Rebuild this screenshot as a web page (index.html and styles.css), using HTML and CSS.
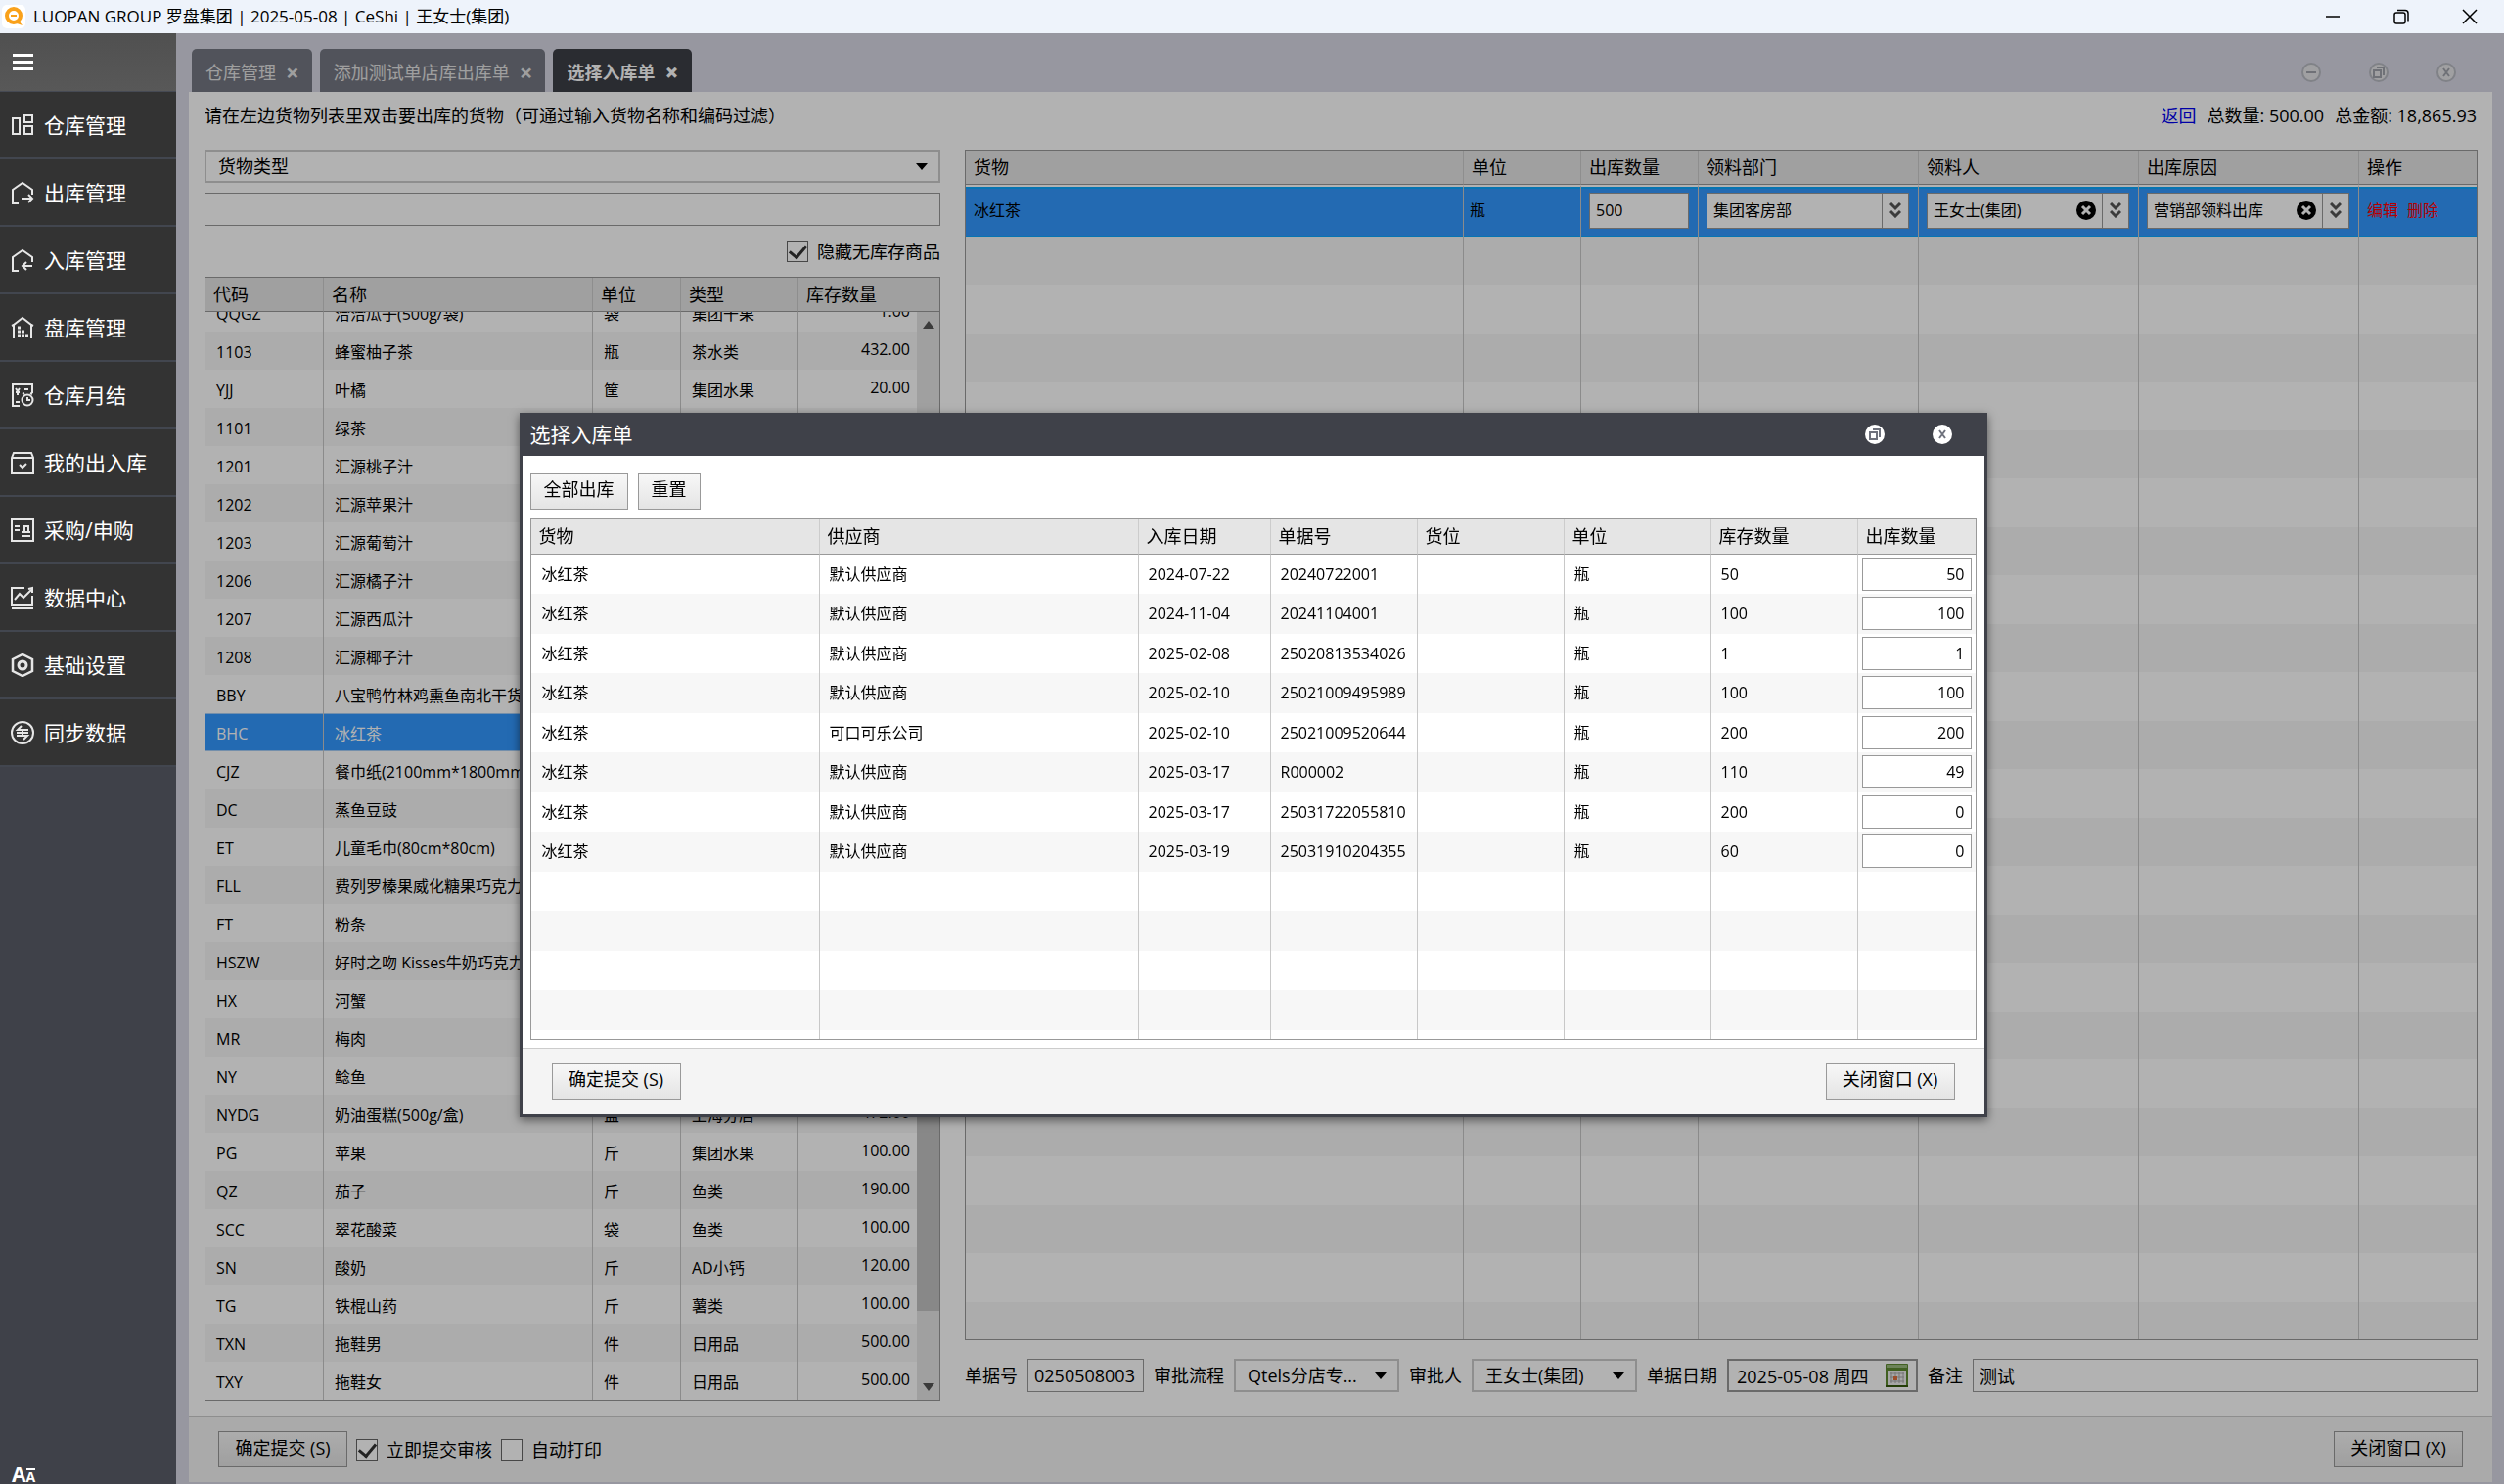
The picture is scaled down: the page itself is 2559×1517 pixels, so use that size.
FILE: index.html
```html
<!DOCTYPE html>
<html lang="zh-CN">
<head>
<meta charset="utf-8">
<meta name="viewport" content="width=device-width, initial-scale=1">
<title>LUOPAN GROUP 罗盘集团</title>
<link rel="stylesheet" href="styles.css">
</head>
<body>

<header class="titlebar">
	<svg class="logo" viewBox="0 0 24 24"><rect width="24" height="24" rx="5" fill="#fff"/><circle cx="12" cy="11" r="7" fill="none" stroke="#f9a11b" stroke-width="4"/><path d="M10 19h5l6 2-4-5" fill="#f9a11b"/><path d="M9 11h6" stroke="#f9a11b" stroke-width="2"/></svg>
	<span class="caption">LUOPAN GROUP 罗盘集团 | 2025-05-08 | CeShi | 王女士(集团)</span>
	<div class="win-buttons">
		<button aria-label="最小化"><svg viewBox="0 0 16 16"><path d="M1 8h14"/></svg></button>
		<button aria-label="还原"><svg viewBox="0 0 16 16"><rect x="1" y="4" width="11" height="11" rx="2"/><path d="M4 1.500h8a3 3 0 0 1 3 3v8"/></svg></button>
		<button aria-label="关闭"><svg viewBox="0 0 16 16"><path d="M1 1l14 14M15 1L1 15"/></svg></button>
	</div>
</header>

<div class="app">
	<nav class="sidebar">
		<button class="menu-toggle" aria-label="菜单"><i></i><i></i><i></i></button>
		<a href="#"><svg viewBox="0 0 24 24"><rect x="2" y="5" width="7" height="16"/><rect x="14" y="2" width="8" height="7"/><rect x="14" y="13" width="8" height="8"/></svg>仓库管理</a>
		<a href="#"><svg viewBox="0 0 24 24"><path d="M8 23H2V9l10-7 10 7v5M11 18h11M18 14l4 4-4 4"/></svg>出库管理</a>
		<a href="#"><svg viewBox="0 0 24 24"><path d="M8 23H2V9l10-7 10 7v5M22 18H12M16 14l-4 4 4 4"/></svg>入库管理</a>
		<a href="#"><svg viewBox="0 0 24 24"><path d="M3 23V9l9-7 9 7v14M1 10l2-1M23 10l-2-1"/><path d="M7 12h3M7 16h8M7 20h12" stroke-width="3" stroke-dasharray="3 1"/></svg>盘库管理</a>
		<a href="#"><svg viewBox="0 0 24 24"><path d="M9 23H2V1h20v9M5 5l2 3 2-3M5 9h4M7 8v4M14 6h4M5 19h4"/><circle cx="17" cy="17" r="5.500"/><path d="M17 14v3h3M12 11l2-1M22 11l-2-1"/></svg>仓库月结</a>
		<a href="#"><svg viewBox="0 0 24 24"><path d="M1 7l2-5h18l2 5v16H1zM1 7h22M9 14l3 3 4-4"/></svg>我的出入库</a>
		<a href="#"><svg viewBox="0 0 24 24"><rect x="1" y="1" width="22" height="22"/><path d="M4 8h5M4 12h5M11 14h9M11 18h9M14 13V8h4v5"/></svg>采购/申购</a>
		<a href="#"><svg viewBox="0 0 24 24"><path d="M14 2H1v17h21v-9M1 23h22M4 14l5-6 4 4 8-8M18 3l4-1v5"/></svg>数据中心</a>
		<a href="#"><svg viewBox="0 0 24 24"><path d="M12 1l10 5v12l-10 5-10-5V6z" stroke-width="2.500"/><circle cx="12" cy="12" r="4" stroke-width="3"/></svg>基础设置</a>
		<a href="#"><svg viewBox="0 0 24 24"><circle cx="12" cy="12" r="11"/><path d="M18 9H7l4-4M12 9v3h6M6 15h11l-4 4M12 15v-3H6"/></svg>同步数据</a>
		<div class="font-size"><b>A</b><small>A</small></div>
	</nav>

	<main class="main">
		<div class="tabs">
			<button class="tab">仓库管理 <b>×</b></button>
			<button class="tab">添加测试单店库出库单 <b>×</b></button>
			<button class="tab active">选择入库单 <b>×</b></button>
			<div class="round-buttons">
				<button aria-label="最小化"><svg viewBox="0 0 20 20"><circle cx="10" cy="10" r="9"/><path d="M5 10h10"/></svg></button>
				<button aria-label="还原"><svg viewBox="0 0 20 20"><circle cx="10" cy="10" r="9"/><path d="M5 8h7v7H5zM8 5h7v8"/></svg></button>
				<button aria-label="关闭"><svg viewBox="0 0 20 20"><circle cx="10" cy="10" r="9"/><path d="M7 6l6 8M13 6l-6 8"/></svg></button>
			</div>
		</div>

		<div class="panel">
			<div class="hint">
				<span>请在左边货物列表里双击要出库的货物（可通过输入货物名称和编码过滤）</span>
				<span class="totals"><a href="#">返回</a><span>总数量: 500.00</span><span>总金额: 18,865.93</span></span>
			</div>

			<div class="columns">
				<section class="left">
					<span class="select"><select aria-label="货物类型"><option>货物类型</option></select></span>
					<input class="filter" type="text" aria-label="过滤">
					<div class="hide-empty"><input type="checkbox" id="hide" checked><label for="hide">隐藏无库存商品</label></div>

					<div class="grid goods">
						<table>
							<colgroup><col class="c-code"><col><col class="c-unit"><col class="c-type"><col class="c-stock"></colgroup>
							<thead><tr><th>代码</th><th>名称</th><th>单位</th><th>类型</th><th>库存数量</th></tr></thead>
						</table>
						<div class="scroller">
							<div class="rows">
								<table>
									<colgroup><col class="c-code"><col><col class="c-unit"><col class="c-type"><col class="c-num"></colgroup>
									<tbody>
									<tr><td>QQGZ</td><td>洽洽瓜子(500g/袋)</td><td>袋</td><td>集团干果</td><td>1.00</td></tr>
									<tr><td>1103</td><td>蜂蜜柚子茶</td><td>瓶</td><td>茶水类</td><td>432.00</td></tr>
									<tr><td>YJJ</td><td>叶橘</td><td>筐</td><td>集团水果</td><td>20.00</td></tr>
									<tr><td>1101</td><td>绿茶</td><td></td><td></td><td></td></tr>
									<tr><td>1201</td><td>汇源桃子汁</td><td></td><td></td><td></td></tr>
									<tr><td>1202</td><td>汇源苹果汁</td><td></td><td></td><td></td></tr>
									<tr><td>1203</td><td>汇源葡萄汁</td><td></td><td></td><td></td></tr>
									<tr><td>1206</td><td>汇源橘子汁</td><td></td><td></td><td></td></tr>
									<tr><td>1207</td><td>汇源西瓜汁</td><td></td><td></td><td></td></tr>
									<tr><td>1208</td><td>汇源椰子汁</td><td></td><td></td><td></td></tr>
									<tr><td>BBY</td><td>八宝鸭竹林鸡熏鱼南北干货</td><td></td><td></td><td></td></tr>
									<tr class="selected"><td>BHC</td><td>冰红茶</td><td></td><td></td><td></td></tr>
									<tr><td>CJZ</td><td>餐巾纸(2100mm*1800mm)</td><td></td><td></td><td></td></tr>
									<tr><td>DC</td><td>蒸鱼豆豉</td><td></td><td></td><td></td></tr>
									<tr><td>ET</td><td>儿童毛巾(80cm*80cm)</td><td></td><td></td><td></td></tr>
									<tr><td>FLL</td><td>费列罗榛果威化糖果巧克力</td><td></td><td></td><td></td></tr>
									<tr><td>FT</td><td>粉条</td><td></td><td></td><td></td></tr>
									<tr><td>HSZW</td><td>好时之吻 Kisses牛奶巧克力</td><td></td><td></td><td></td></tr>
									<tr><td>HX</td><td>河蟹</td><td></td><td></td><td></td></tr>
									<tr><td>MR</td><td>梅肉</td><td></td><td></td><td></td></tr>
									<tr><td>NY</td><td>鲶鱼</td><td></td><td></td><td></td></tr>
									<tr><td>NYDG</td><td>奶油蛋糕(500g/盒)</td><td>盒</td><td>上海分店</td><td>472.00</td></tr>
									<tr><td>PG</td><td>苹果</td><td>斤</td><td>集团水果</td><td>100.00</td></tr>
									<tr><td>QZ</td><td>茄子</td><td>斤</td><td>鱼类</td><td>190.00</td></tr>
									<tr><td>SCC</td><td>翠花酸菜</td><td>袋</td><td>鱼类</td><td>100.00</td></tr>
									<tr><td>SN</td><td>酸奶</td><td>斤</td><td>AD小钙</td><td>120.00</td></tr>
									<tr><td>TG</td><td>铁棍山药</td><td>斤</td><td>薯类</td><td>100.00</td></tr>
									<tr><td>TXN</td><td>拖鞋男</td><td>件</td><td>日用品</td><td>500.00</td></tr>
									<tr><td>TXY</td><td>拖鞋女</td><td>件</td><td>日用品</td><td>500.00</td></tr>
									</tbody>
								</table>
							</div>
							<div class="scrollbar"><i class="up"></i><i class="thumb"></i><i class="down"></i></div>
						</div>
					</div>
				</section>

				<section class="right">
					<div class="grid out">
						<table>
							<colgroup><col><col class="w120"><col class="w120"><col class="w225"><col class="w225"><col class="w225"><col class="w120"></colgroup>
							<thead><tr><th>货物</th><th>单位</th><th>出库数量</th><th>领料部门</th><th>领料人</th><th>出库原因</th><th>操作</th></tr></thead>
							<tbody>
							<tr class="current">
								<td>冰红茶</td>
								<td>瓶</td>
								<td><input type="text" value="500" aria-label="出库数量"></td>
								<td><div class="combo"><select aria-label="领料部门"><option>集团客房部</option></select><button class="drop" aria-label="展开"><svg viewBox="0 0 12 16"><path d="M1 1l5 5 5-5M1 9l5 5 5-5"/></svg></button></div></td>
								<td><div class="combo"><select aria-label="领料人"><option>王女士(集团)</option></select><button class="clear" aria-label="清除"><svg viewBox="0 0 20 20"><circle cx="10" cy="10" r="10"/><path d="M6 6l8 8M14 6l-8 8"/></svg></button><button class="drop" aria-label="展开"><svg viewBox="0 0 12 16"><path d="M1 1l5 5 5-5M1 9l5 5 5-5"/></svg></button></div></td>
								<td><div class="combo"><select aria-label="出库原因"><option>营销部领料出库</option></select><button class="clear" aria-label="清除"><svg viewBox="0 0 20 20"><circle cx="10" cy="10" r="10"/><path d="M6 6l8 8M14 6l-8 8"/></svg></button><button class="drop" aria-label="展开"><svg viewBox="0 0 12 16"><path d="M1 1l5 5 5-5M1 9l5 5 5-5"/></svg></button></div></td>
								<td class="actions"><a href="#">编辑</a><a href="#">删除</a></td>
							</tr>
							<tr class="fill"><td></td><td></td><td></td><td></td><td></td><td></td><td></td></tr>
							</tbody>
						</table>
					</div>

					<div class="bill">
						<label for="no">单据号</label>
						<input type="text" id="no" class="no" value="0250508003">
						<label for="flow">审批流程</label>
						<span class="select"><select id="flow"><option>Qtels分店专...</option></select></span>
						<label for="who">审批人</label>
						<span class="select"><select id="who"><option>王女士(集团)</option></select></span>
						<label for="date">单据日期</label>
						<span class="date"><input type="text" id="date" value="2025-05-08 周四"><svg viewBox="0 0 23 24"><rect width="23" height="24" rx="1" fill="#5d8a30"/><path d="M1 1h21v3H1z" fill="#9dbc80"/><path d="M2 7h19v15H2z" fill="#eee"/><path d="M6 8v12M10 8v12M14 8v12M18 8v12M5 10h14M5 14h14M5 18h14" stroke="#aaa"/><path d="M8 13h4v4H8z" fill="#e07040"/><path d="M0 22h23v2H0z" fill="#34580c"/></svg></span>
						<label for="memo">备注</label>
						<input type="text" id="memo" class="memo" value="测试">
					</div>
				</section>
			</div>

			<footer class="footer">
				<button class="btn wide">确定提交 (S)</button>
				<input type="checkbox" id="now" checked><label for="now">立即提交审核</label>
				<input type="checkbox" id="print"><label for="print">自动打印</label>
				<button class="btn wide close">关闭窗口 (X)</button>
			</footer>
		</div>
		<div class="mask"></div>
	</main>
</div>

<div class="dialog" role="dialog" aria-labelledby="dlg-title">
	<div class="dialog-head">
		<span id="dlg-title">选择入库单</span>
		<div class="round-buttons">
			<button aria-label="还原"><svg viewBox="0 0 20 20"><circle cx="10" cy="10" r="9"/><path d="M5 8h7v7H5zM8 5h7v8"/></svg></button>
			<button aria-label="关闭"><svg viewBox="0 0 20 20"><circle cx="10" cy="10" r="9"/><path d="M7 6l6 8M13 6l-6 8"/></svg></button>
		</div>
	</div>
	<div class="dialog-body">
		<div class="tools"><button class="btn">全部出库</button><button class="btn">重置</button></div>
		<div class="grid stock">
			<table>
				<colgroup><col class="w295"><col><col class="w135"><col class="w150"><col class="w150"><col class="w150"><col class="w150"><col class="w120"></colgroup>
				<thead><tr><th>货物</th><th>供应商</th><th>入库日期</th><th>单据号</th><th>货位</th><th>单位</th><th>库存数量</th><th>出库数量</th></tr></thead>
				<tbody>
				<tr><td>冰红茶</td><td>默认供应商</td><td>2024-07-22</td><td>20240722001</td><td></td><td>瓶</td><td>50</td><td><input type="text" value="50" aria-label="出库数量"></td></tr>
				<tr><td>冰红茶</td><td>默认供应商</td><td>2024-11-04</td><td>20241104001</td><td></td><td>瓶</td><td>100</td><td><input type="text" value="100" aria-label="出库数量"></td></tr>
				<tr><td>冰红茶</td><td>默认供应商</td><td>2025-02-08</td><td>25020813534026</td><td></td><td>瓶</td><td>1</td><td><input type="text" value="1" aria-label="出库数量"></td></tr>
				<tr><td>冰红茶</td><td>默认供应商</td><td>2025-02-10</td><td>25021009495989</td><td></td><td>瓶</td><td>100</td><td><input type="text" value="100" aria-label="出库数量"></td></tr>
				<tr><td>冰红茶</td><td>可口可乐公司</td><td>2025-02-10</td><td>25021009520644</td><td></td><td>瓶</td><td>200</td><td><input type="text" value="200" aria-label="出库数量"></td></tr>
				<tr><td>冰红茶</td><td>默认供应商</td><td>2025-03-17</td><td>R000002</td><td></td><td>瓶</td><td>110</td><td><input type="text" value="49" aria-label="出库数量"></td></tr>
				<tr><td>冰红茶</td><td>默认供应商</td><td>2025-03-17</td><td>25031722055810</td><td></td><td>瓶</td><td>200</td><td><input type="text" value="0" aria-label="出库数量"></td></tr>
				<tr><td>冰红茶</td><td>默认供应商</td><td>2025-03-19</td><td>25031910204355</td><td></td><td>瓶</td><td>60</td><td><input type="text" value="0" aria-label="出库数量"></td></tr>
				<tr class="fill"><td></td><td></td><td></td><td></td><td></td><td></td><td></td><td></td></tr>
				</tbody>
			</table>
		</div>
	</div>
	<div class="dialog-foot"><button class="btn wide">确定提交 (S)</button><button class="btn wide close">关闭窗口 (X)</button></div>
</div>

</body>
</html>
```
FILE: styles.css
```css
* {
	box-sizing: border-box;
}

body {
	margin: 0;
	height: 100vh;
	display: flex;
	flex-direction: column;
	overflow: hidden;
	color: #000;
	font-family: "Open Sans", "Noto Sans CJK SC", sans-serif;
	font-size: 18px;
	line-height: 24px;
}

button, input, select {
	font: inherit;
	color: inherit;
	margin: 0;
}

button {
	border: 0;
	padding: 0;
	background: none;
}

svg {
	display: block;
	fill: none;
	stroke: currentColor;
}

/* window title */
.titlebar {
	height: 34px;
	flex: none;
	display: flex;
	align-items: center;
	gap: 8px;
	padding-left: 2px;
	background: #eef3fb;
	font-size: 17px;
}

.logo {
	width: 24px;
	height: 24px;
	stroke: none;
}

.win-buttons {
	margin-left: auto;
	display: flex;
}

.win-buttons button {
	width: 70px;
	height: 34px;
	display: flex;
	align-items: center;
	justify-content: center;
}

.win-buttons svg {
	width: 16px;
	height: 16px;
	stroke-width: 1.5;
}

.app {
	flex: 1;
	min-height: 0;
	display: flex;
}

/* sidebar */
.sidebar {
	width: 180px;
	flex: none;
	display: flex;
	flex-direction: column;
	background: #3f4149;
	color: #fff;
	font-size: 21px;
}

.menu-toggle {
	height: 60px;
	padding: 0 13px;
	display: flex;
	flex-direction: column;
	justify-content: center;
	gap: 4px;
	background: linear-gradient(#505050, #585858);
	border-bottom: 1px solid #464a54;
}

.menu-toggle i {
	width: 21px;
	height: 3px;
	background: #fff;
}

.sidebar a {
	height: 69px;
	display: flex;
	align-items: center;
	gap: 10px;
	padding-left: 11px;
	background: #333;
	border-bottom: 2px solid #42464f;
	color: #fff;
	text-decoration: none;
}

.sidebar svg {
	width: 24px;
	height: 24px;
	stroke-width: 2;
	color: #e6e6e6;
}

.font-size {
	margin-top: auto;
	padding-left: 12px;
	display: flex;
	align-items: flex-end;
	line-height: 20px;
}

.font-size small {
	font-size: 14px;
	font-weight: bold;
	line-height: 14px;
	border-top: 2px solid #fff;
}

/* tabs */
.main {
	flex: 1;
	min-width: 0;
	position: relative;
	display: flex;
	flex-direction: column;
	padding: 0 12px 2px 13px;
	background: #d8d8e6;
}

.mask {
	position: absolute;
	inset: 0;
	background: rgba(0, 0, 0, 0.3);
}

.tabs {
	height: 60px;
	display: flex;
	align-items: flex-end;
	gap: 8px;
	padding-left: 3px;
}

.tab {
	height: 44px;
	padding: 4px 13px 0 14px;
	border-radius: 5px 5px 0 0;
	background: #757883;
	color: #e4e4e4;
	display: flex;
	align-items: center;
	gap: 10px;
}

.tab b {
	font-size: 24px;
}

.tab.active {
	background: #3d3f47;
	color: #fff;
	font-weight: bold;
}

.round-buttons {
	margin-left: auto;
	display: flex;
	gap: 49px;
}

.round-buttons svg {
	width: 20px;
	height: 20px;
	stroke-width: 2;
	color: #6f727d;
}

.round-buttons circle {
	fill: #fff;
	stroke: #fff;
}

.tabs .round-buttons {
	padding: 0 37px 10px 0;
}

.tabs .round-buttons circle {
	fill: #e6e6e8;
	stroke: #b8bac2;
}

.tabs .round-buttons svg {
	color: #a0a2ab;
}

/* panel */
.panel {
	flex: 1;
	min-height: 0;
	display: flex;
	flex-direction: column;
	background: #fff;
}

.hint {
	display: flex;
	justify-content: space-between;
	padding: 12px 16px 23px;
}

.totals {
	display: flex;
	gap: 11px;
}

.totals a {
	color: #00e;
	text-decoration: none;
}

.columns {
	flex: 1;
	min-height: 0;
	display: grid;
	grid-template-columns: 752fr 1546fr;
	gap: 25px;
	padding: 0 15px 15px 16px;
}

.left, .right {
	min-width: 0;
	min-height: 0;
	display: flex;
	flex-direction: column;
}

input[type=text] {
	height: 34px;
	padding: 0 6px;
	border: 1px solid #999;
	border-radius: 0;
	background: #fff;
	min-width: 0;
}

input[type=checkbox] {
	appearance: none;
	width: 22px;
	height: 22px;
	border: 1px solid #666;
	background: #fff;
	display: grid;
	place-items: center;
}

input[type=checkbox]:checked::before {
	content: "";
	width: 8px;
	height: 14px;
	margin-bottom: 4px;
	border: solid #333;
	border-width: 0 3px 3px 0;
	transform: rotate(40deg);
}

select {
	appearance: none;
	border: 0;
	border-radius: 0;
	background: none;
	width: 100%;
}

.select {
	position: relative;
	display: block;
}

.select select {
	display: block;
	height: 34px;
	padding: 0 12px;
	border: 2px solid #ccc;
}

.select::after {
	content: "";
	position: absolute;
	right: 13px;
	top: 14px;
	border: 6px solid transparent;
	border-top: 7px solid #000;
	border-bottom: 0;
	pointer-events: none;
}

.filter {
	margin-top: 10px;
	flex: none;
}

.hide-empty {
	height: 52px;
	flex: none;
	display: flex;
	align-items: center;
	justify-content: flex-end;
	gap: 9px;
}

/* data grids */
.grid {
	flex: 1;
	min-height: 0;
	border: 1px solid #999;
	display: flex;
	flex-direction: column;
}

table {
	width: 100%;
	table-layout: fixed;
	border-collapse: separate;
	border-spacing: 0;
}

th {
	height: 35px;
	padding: 0 8px;
	background: #e5e5e5;
	border-right: 1px solid #ccc;
	border-bottom: 1px solid #999;
	font-weight: normal;
	text-align: left;
	white-space: nowrap;
}

td {
	padding: 0 10px;
	border-right: 1px solid #c8c8c8;
	font-size: 16px;
	white-space: nowrap;
	overflow: hidden;
}

th:last-child, td:last-child {
	border-right: 0;
}

.w120 { width: 120px; }
.w135 { width: 135px; }
.w150 { width: 150px; }
.w225 { width: 225px; }
.w295 { width: 295px; }

.c-code { width: 121px; }
.c-unit { width: 90px; }
.c-type { width: 120px; }
.c-stock { width: 144px; }
.c-num { width: 121px; }

.scroller {
	flex: 1;
	min-height: 0;
	display: flex;
}

.rows {
	flex: 1;
	min-width: 0;
	overflow: hidden;
	display: flex;
	flex-direction: column;
	justify-content: flex-end;
}

.goods td {
	height: 39px;
	padding: 2px 10px 0 11px;
}

.goods td:last-child {
	padding: 0 7px 4px;
	text-align: right;
}

.goods tr:nth-child(even) {
	background: #f7f7f7;
}

.goods tr.selected {
	background: #39f;
	color: #fff;
}

.selected td {
	box-shadow: inset 0 1px #a6cdf5, inset 0 -1px #a6cdf5;
}

.scrollbar {
	width: 23px;
	display: flex;
	flex-direction: column;
	align-items: center;
	padding: 9px 0;
	background: #e6e6e6;
}

.up, .down {
	border: 6px solid transparent;
}

.up {
	border-top: 0;
	border-bottom: 8px solid #555;
}

.down {
	border-bottom: 0;
	border-top: 8px solid #555;
}

.thumb {
	width: 100%;
	flex: 1;
	margin: 180px 0 74px;
	background: #c3c3c3;
}

/* the fill row takes whatever height the data rows leave */
.out table, .stock table {
	height: 100%;
}

.fill {
	height: 100%;
}

.out td, .stock td {
	padding: 0 6px;
}

.out td:first-child {
	padding-left: 8px;
}

.out .current td {
	height: 53px;
	padding-bottom: 3px;
	border-top: 2px solid #fff;
	background: #39f;
	background-clip: padding-box;
	box-shadow: inset 0 2px #0ba8ff, inset 0 -1px #0ba8ff;
}

.current input[type=text] {
	width: 102px;
	height: 37px;
	display: block;
	margin-left: 2px;
}

.out .fill td {
	background: repeating-linear-gradient(#f7f7f7 0 49px, #fff 49px 99px);
}

.combo {
	width: 207px;
	height: 37px;
	margin-left: 2px;
	display: flex;
	align-items: center;
	border: 1px solid #999;
	background: #fff;
}

.combo select {
	flex: 1;
	min-width: 0;
	padding: 0 6px;
}

.combo .clear {
	margin-right: 6px;
}

.clear svg {
	width: 20px;
	height: 20px;
	fill: #000;
	stroke: none;
}

.clear path {
	stroke: #fff;
	stroke-width: 3;
}

.drop {
	width: 27px;
	height: 35px;
	border-left: 1px solid #999;
	display: grid;
	place-items: center;
}

.drop svg {
	width: 12px;
	height: 16px;
	stroke: #555;
	stroke-width: 3;
}

.actions a {
	margin: 0 7px 0 2px;
	color: #f00;
	text-decoration: none;
}

/* bill fields */
.bill {
	display: flex;
	align-items: center;
	gap: 10px;
	padding: 19px 0 9px;
	white-space: nowrap;
}

.bill .no {
	width: 119px;
}

.bill .select {
	width: 169px;
}

.bill .memo {
	flex: 1;
}

.date {
	width: 195px;
	height: 34px;
	display: flex;
	align-items: center;
	padding-right: 8px;
	border: 2px solid #999;
}

.date input[type=text] {
	flex: 1;
	height: 30px;
	border: 0;
	padding: 0 0 0 8px;
}

.date svg {
	width: 23px;
	height: 24px;
	stroke: none;
}

.btn {
	height: 37px;
	padding: 0 13px 4px;
	border: 1px solid #999;
	background: linear-gradient(#f7f7f7, #e4e4e4);
	white-space: nowrap;
}

.wide {
	min-width: 132px;
}

.footer {
	height: 68px;
	display: flex;
	align-items: center;
	gap: 9px;
	padding: 0 30px;
	background: #f4f4f4;
	border-top: 1px solid #ccc;
}

.close {
	margin-left: auto;
}

/* dialog */
.dialog {
	position: fixed;
	top: calc(50% - 337px);
	left: calc(50% - 749px);
	width: 1500px;
	height: 720px;
	display: flex;
	flex-direction: column;
	border: 3px solid #3f4149;
	border-top-width: 1px;
	background: #fff;
	box-shadow: 0 3px 9px rgba(0, 0, 0, 0.5);
}

.dialog-head {
	height: 43px;
	display: flex;
	align-items: center;
	padding: 0 33px 0 8px;
	background: #3f4149;
	color: #fff;
	font-size: 21px;
}

.dialog-body {
	flex: 1;
	min-height: 0;
	display: flex;
	flex-direction: column;
	padding: 18px 8px 8px;
}

.tools {
	display: flex;
	gap: 10px;
	margin-bottom: 9px;
}

.stock th {
	height: 36px;
}

.stock td {
	height: 40px;
	padding: 0 10px;
}

.stock tr:nth-child(even) td {
	height: 41px;
	background: #f7f7f7;
}

.stock td:first-child {
	padding-left: 11px;
}

.stock td:last-child {
	padding: 0 4px;
}

.stock input[type=text] {
	display: block;
	width: 100%;
	text-align: right;
}

.stock .fill td {
	background: repeating-linear-gradient(#fff 0 40px, #f7f7f7 40px 81px);
}

.dialog-foot {
	height: 68px;
	display: flex;
	align-items: center;
	padding: 0 30px;
	border-top: 1px solid #ccc;
	background: #f4f4f4;
}
```
